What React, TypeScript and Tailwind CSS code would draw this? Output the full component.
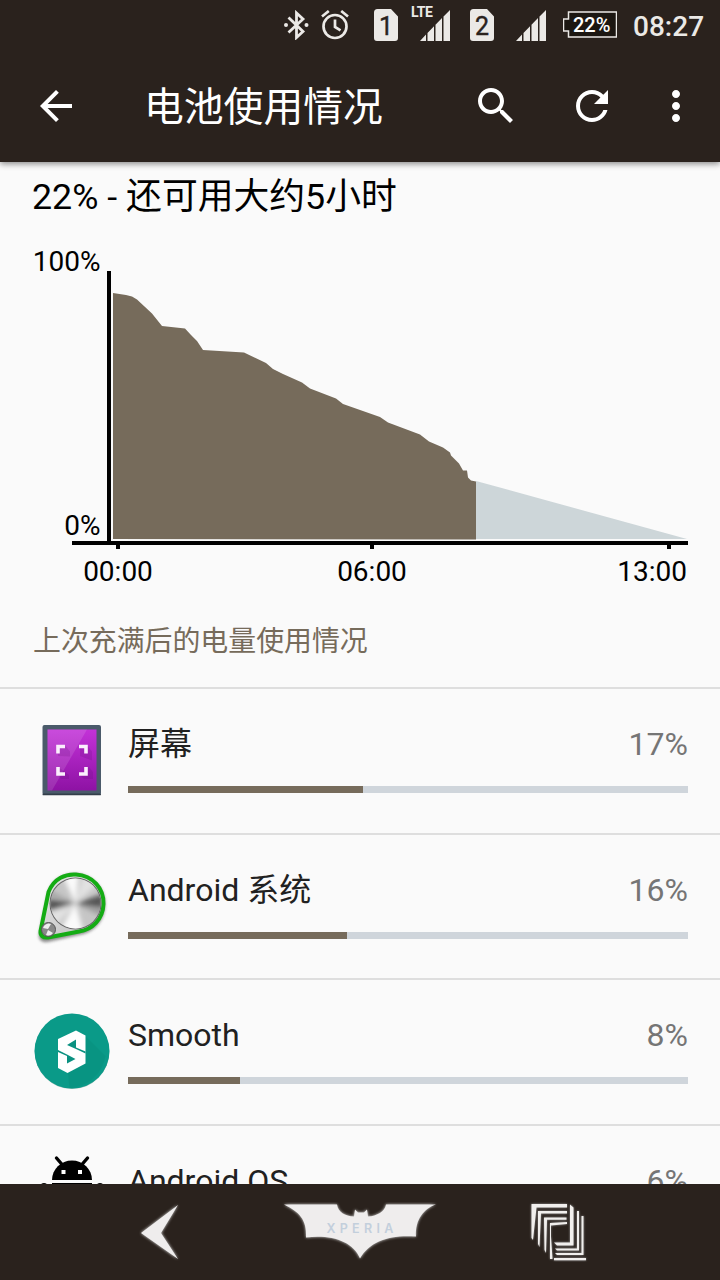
import type { ReactNode } from "react";

const apps = [
  { name: "屏幕", percent: 17, bar: 42, icon: <ScreenIcon /> },
  { name: "Android 系统", percent: 16, bar: 39.1, icon: <SystemIcon /> },
  { name: "Smooth", percent: 8, bar: 20, icon: <SmoothIcon /> },
  { name: "Android OS", percent: 6, bar: 15, icon: <AndroidIcon /> },
];

function ScreenIcon() {
  return (
    <svg viewBox="0 0 76 76" className="h-[76px] w-[76px]">
      <defs>
        <linearGradient id="screen" x1="0" y1="0" x2="0" y2="1">
          <stop offset="0" stopColor="#c332d8" />
          <stop offset="1" stopColor="#8e12a4" />
        </linearGradient>
      </defs>
      <rect x="8.5" y="3" width="58.5" height="70" rx="2" fill="#4a5a6a" />
      <rect x="8.5" y="71.5" width="58.5" height="1.8" rx="1" fill="#333e4a" />
      <rect x="13.5" y="7.5" width="49" height="61" fill="url(#screen)" />
      <path d="M13.5 7.5H53L18 68.5H13.5z" fill="#fff" opacity=".12" />
      <path d="M24 34v-9.5h8l4 5v5zM46 34v-9.5h8l4 5v9zM24 53v-8l11 8v4h-8zM46 53l9-8 4 5v7h-9z" fill="#5c0a72" opacity=".18" />
      <path
        d="M24 31.500v-7h7M45 24.500h7v7M24 45v7h7M52 45v7h-7"
        fill="none"
        stroke="#fbeffd"
        strokeWidth="3.600"
      />
    </svg>
  );
}

function SystemIcon() {
  return (
    <svg viewBox="0 0 76 76" className="mt-1 h-[76px] w-[76px] overflow-visible">
      <defs>
        <linearGradient id="belt" x1="0" y1="0" x2="1" y2="1">
          <stop offset="0" stopColor="#e8e8e8" />
          <stop offset="1" stopColor="#bdbdbd" />
        </linearGradient>
        <filter id="soft" x="-20%" y="-20%" width="140%" height="140%">
          <feGaussianBlur stdDeviation="1.8" />
        </filter>
        <clipPath id="knob">
          <circle cx="41.5" cy="31.5" r="25" />
        </clipPath>
        <filter id="sheen">
          <feGaussianBlur stdDeviation="2.6" />
        </filter>
      </defs>
      <path d="M14 20C20 3 37-1 50 3c14 5 23 18 21 33-2 16-13 25-26 27l-31 7C7 71 4 67 5 62z" fill="#444" opacity=".6" filter="url(#soft)" />
      <path
        d="M14.500 20C20 6 32 1.800 42 2.500c17 1 28 14 27.500 29.500-.5 15-11 25.500-24.500 27.500L14 65.500c-5 .6-8-2-7.500-6.500z"
        fill="url(#belt)"
        stroke="#14ac14"
        strokeWidth="4"
      />
      <circle cx="41.500" cy="31.500" r="26" fill="#666" />
      <g clipPath="url(#knob)">
        <rect x="15" y="5" width="54" height="54" fill="#c6c6c6" />
        <g filter="url(#sheen)">
          <path d="M41.500 31.500L14 27v12zM41.500 31.500L69 22v14z" fill="#555" />
          <path d="M41.500 31.500L70 38v7zM41.500 31.500L14 18v5z" fill="#999" />
          <path d="M41.500 31.500L27 0h18zM41.500 31.500L24 62h26z" fill="#fafafa" />
          <path d="M41.500 31.500L50 0l16 10zM41.500 31.500L10 42l8 16z" fill="#e2e2e2" />
        </g>
      </g>
      <circle cx="14.500" cy="57.500" r="7" fill="#888" stroke="#555" />
      <path d="M9 56a6 6 0 0 1 8-4l-3 5zM14 58l5 3a6 6 0 0 1-7 2z" fill="#eee" />
    </svg>
  );
}

function SmoothIcon() {
  return (
    <svg viewBox="0 0 76 76" className="h-[76px] w-[76px]">
      <circle cx="38" cy="38.700" r="37.300" fill="#93b9b3" />
      <circle cx="38" cy="38" r="37.500" fill="#0a9a88" />
      <path d="M51.500 23l20 20a38 38 0 0 1-36 32L34 60z" fill="#078875" opacity=".3" />
      <path d="M42 17.500l9.500 5v28L33.500 60 24 55V26z" fill="#fff" />
      <path d="M42 26.500l-9 5.500 9 4 9.500 4.500v-2L42 34.500zM24 37l9 4.500 8.500 4.500-8.500 4.500V43l-9-4z" fill="#0a9181" />
    </svg>
  );
}

function AndroidIcon() {
  return (
    <svg viewBox="0 0 76 76" className="-mt-[10px] h-[76px] w-[76px]">
      <path d="M18 31a20 19.500 0 0 1 40 0z" />
      <path d="M22.500 9l6 7M53.500 9l-6 7" stroke="#000" strokeWidth="3.400" strokeLinecap="round" />
      <rect x="27.500" y="21" width="4" height="4" fill="#fff" />
      <rect x="44" y="21" width="4" height="4" fill="#fff" />
      <path d="M18 34h40v28H18z" />
      <rect x="5.500" y="34" width="9" height="26" rx="4.500" />
      <rect x="61.500" y="34" width="9" height="26" rx="4.500" />
    </svg>
  );
}

function SimCard({ label }: { label: string }) {
  return (
    <svg viewBox="0 0 24 32" className="h-8 w-6 shrink-0">
      <path d="M3.500 0H17l7 7.500V29a3 3 0 0 1-3 3H3a3 3 0 0 1-3-3V3.500A3.500 3.500 0 0 1 3.500 0z" fill="#ebe9e6" />
      <text x="12" y="26" textAnchor="middle" fontSize="25" fill="#2a221d" stroke="#2a221d" strokeWidth=".4">
        {label}
      </text>
    </svg>
  );
}

function Signal() {
  return (
    <svg viewBox="0 0 30 31" className="h-[31px] w-[30px] shrink-0" fill="#ebe9e6">
      <path d="M0 31l6-6.500V31zM7.500 23l6.500-6.700V31H7.500zM15.500 14.800l6.500-6.700V31h-6.500zM23.500 6.500l6.500-6.500v31h-6.500z" />
    </svg>
  );
}

function StatusBar() {
  return (
    <div className="flex h-[50px] items-start pl-[283px] text-[#ebe9e6]">
      <svg viewBox="0 0 26 30" className="mt-[10px] h-[30px] w-[26px]" fill="none" stroke="#ebe9e6" strokeWidth="2.800">
        <path d="M5.500 7.500L20 21.500l-6.500 6V3l6.500 6L5.500 22.500" />
        <circle cx="3" cy="15" r="2" fill="#ebe9e6" stroke="none" />
        <circle cx="23.500" cy="15" r="2" fill="#ebe9e6" stroke="none" />
      </svg>
      <svg viewBox="0 0 28 30" className="mt-[10px] ml-[12px] h-[30px] w-7" fill="none" stroke="#ebe9e6" strokeWidth="2.700">
        <circle cx="14" cy="16.500" r="11.500" />
        <path d="M14 9.500V17l5.500 3.400M1 6.500L7.800 1M27 6.500L20.200 1" />
      </svg>
      <div className="mt-[9px] ml-[25px]">
        <SimCard label="1" />
      </div>
      <div className="relative mt-[10px] ml-[22px]">
        <Signal />
        <span className="absolute -top-[6px] -left-[9px] text-[14px] leading-4 font-bold tracking-[-0.300px]">LTE</span>
      </div>
      <div className="mt-[9px] ml-[20px]">
        <SimCard label="2" />
      </div>
      <div className="mt-[10px] ml-[22px]">
        <Signal />
      </div>
      <div className="relative mt-[11px] ml-[17px] h-[27px] w-[54px]">
        <svg viewBox="0 0 54 27" className="h-full w-full">
          <path d="M5.500 1h48v25h-48v-6h-5V8h5z" fill="#1c1712" stroke="#ebe9e6" strokeWidth="1.500" />
        </svg>
        <span className="absolute inset-y-0 left-[10px] text-[20px] leading-[28px] font-medium text-white">22%</span>
      </div>
      <span className="ml-[16px] text-[28px] leading-[53px] font-medium">08:27</span>
    </div>
  );
}

function IconButton({ label, className, children }: { label: string; className?: string; children: ReactNode }) {
  return (
    <button aria-label={label} className={className}>
      <svg viewBox="0 0 24 24" className="h-12 w-12" fill="#fff">
        {children}
      </svg>
    </button>
  );
}

function AppBar() {
  return (
    <header className="flex h-28 items-center pl-8 text-white">
      <IconButton label="返回">
        <path d="M20 11H7.830l5.590-5.590L12 4l-8 8 8 8 1.410-1.410L7.830 13H20v-2z" />
      </IconButton>
      <h1 className="mt-1 ml-16 w-[328px] text-[39.800px] leading-none">电池使用情况</h1>
      <IconButton label="搜索">
        <path d="M15.500 14h-.79l-.28-.27C15.410 12.590 16 11.110 16 9.500 16 5.910 13.090 3 9.500 3S3 5.910 3 9.500 5.910 16 9.500 16c1.610 0 3.090-.59 4.230-1.570l.27.28v.79l5 4.990L20.490 19l-4.990-5zm-6 0C7.010 14 5 11.990 5 9.500S7.010 5 9.500 5 14 7.010 14 9.500 11.990 14 9.500 14z" />
      </IconButton>
      <IconButton label="刷新" className="ml-12">
        <path d="M17.650 6.350C16.200 4.900 14.210 4 12 4c-4.420 0-7.990 3.580-7.990 8s3.570 8 7.990 8c3.730 0 6.840-2.550 7.730-6h-2.080c-.82 2.330-3.040 4-5.650 4-3.310 0-6-2.690-6-6s2.690-6 6-6c1.660 0 3.140.69 4.220 1.780L13 11h7V4l-2.350 2.350z" />
      </IconButton>
      <IconButton label="更多" className="ml-9">
        <path d="M12 8c1.100 0 2-.9 2-2s-.9-2-2-2-2 .9-2 2 .9 2 2 2zm0 2c-1.100 0-2 .9-2 2s.9 2 2 2 2-.9 2-2-.9-2-2-2zm0 6c-1.100 0-2 .9-2 2s.9 2 2 2 2-.9 2-2-.9-2-2-2z" />
      </IconButton>
    </header>
  );
}

function BatteryChart() {
  return (
    <svg viewBox="0 232 720 368" className="block h-[368px] w-[720px] shrink-0">
      <path
        d="M113 539V293l13 2 6 1.500 5 3 15 14 10 12.500 23 2.500 6 6.500 6 6 6 9 41 2.500 22 10.500 7 6 10 5 19 8.500 8 6 26 10 7 5.500 37 13 8 5.500 32 12 9 7 14 6 7 5 1 3 8 8 4 7h4l1 7 3 3 5 1v58z"
        fill="#766b5b"
      />
      <path d="M476 539v-58l211 58z" fill="#cdd6d9" />
      <path d="M109 271v270M72 543h616M118 545v4M372 545v4M669 545v4" stroke="#000" strokeWidth="4" fill="none" />
      <g fontSize="28" fill="#000">
        <text x="100.500" y="271" textAnchor="end">100%</text>
        <text x="100.500" y="535" textAnchor="end">0%</text>
        <text x="118" y="581" textAnchor="middle">00:00</text>
        <text x="372" y="581" textAnchor="middle">06:00</text>
        <text x="687" y="581" textAnchor="end">13:00</text>
      </g>
    </svg>
  );
}

function AppRow({ name, percent, bar, icon }: (typeof apps)[number]) {
  return (
    <li className="flex h-[145.670px] shrink-0 border-t-2 border-[#dedede] pt-[33px] pr-8 pl-[34px]">
      <div className="mr-[18px] h-[76px] w-[76px]">{icon}</div>
      <div className="flex-1">
        <div className="flex justify-between text-[32px] leading-[44px]">
          <span className="text-[#212121]">{name}</span>
          <span className="text-[#757575]">{percent}%</span>
        </div>
        <div className="mt-[20px] h-[7px] bg-[#cfd5db]">
          <div className="h-full bg-[#766b5b]" style={{ width: `${bar}%` }} />
        </div>
      </div>
    </li>
  );
}

function NavBar() {
  return (
    <nav className="flex h-24 shrink-0 items-start bg-[#2a221d]">
      <svg viewBox="0 0 44 60" className="mt-[18px] ml-[138px] h-[60px] w-11">
        <path d="M40 3L3 31l37 26-17-26z" fill="#efeded" className="drop-shadow-[0_0_1.500px_#ddd]" />
      </svg>
      <svg viewBox="0 0 156 60" className="mt-[18px] ml-[100px] h-[60px] w-[156px]">
        <path
          d="M2 2.500h53C56 10 63 14 72 14.500l1-7 3 3h6l3-3 1 7c9-.5 17-5 18-12h50c-12 4-21 15-20 32-25-2-46 4-56 22-7-17-28-24-54-21C25 17 17 10 2 2.500z"
          fill="#efeded"
          className="drop-shadow-[0_0_1.500px_#ddd]"
        />
        <text x="80" y="30.500" textAnchor="middle" fontSize="12.500" fontWeight="600" letterSpacing="4.300" fill="#c3cfdc" fontFamily="Inter, sans-serif">
          XPERIA
        </text>
      </svg>
      <svg viewBox="0 0 60 60" className="mt-[18px] ml-[90px] h-[60px] w-[60px]" fill="#f1efed">
        <g className="drop-shadow-[0_0_1px_#999]">
          <path d="M3.500 2H39v3.500H8.500L5 38 3.500 36z" />
          <path d="M10 9h29v2.600H13L11.500 45 10 42z" />
          <path d="M16 15.500h22.500v2.300H19L18 51l-1.500-3z" />
          <path d="M22 21l17-1v2l-16 1.500v11l1.500 22.500H22z" />
          <path d="M42 2.500l3.500 3V43.500H29l-3-3h16z" />
          <path d="M49 9h2v39.500H29L27 46.500h22z" />
          <path d="M53.500 14h2v39H29L27 51h26.500z" />
          <path d="M26 56h32v2.300H26z" />
        </g>
      </svg>
    </nav>
  );
}

export default function App() {
  return (
    <div className="flex h-[1280px] w-[720px] flex-col overflow-hidden bg-[#fafafa] font-[Roboto,'Noto_Sans_CJK_SC',sans-serif]">
      <div className="z-10 h-[162px] shrink-0 bg-[#2a221d] shadow-[0_2px_6px_rgba(0,0,0,0.450)]">
        <StatusBar />
        <AppBar />
      </div>
      <main className="flex h-[1022px] shrink-0 flex-col overflow-hidden">
        <p className="h-[70px] shrink-0 pl-8 text-[35.800px] leading-[71px] text-black">22% - 还可用大约5小时</p>
        <BatteryChart />
        <h2 className="h-[87px] shrink-0 pl-[33px] text-[27.900px] leading-[83px] text-[#766b5b]">上次充满后的电量使用情况</h2>
        <ul className="flex flex-col">
          {apps.map((app) => (
            <AppRow key={app.name} {...app} />
          ))}
        </ul>
      </main>
      <NavBar />
    </div>
  );
}
